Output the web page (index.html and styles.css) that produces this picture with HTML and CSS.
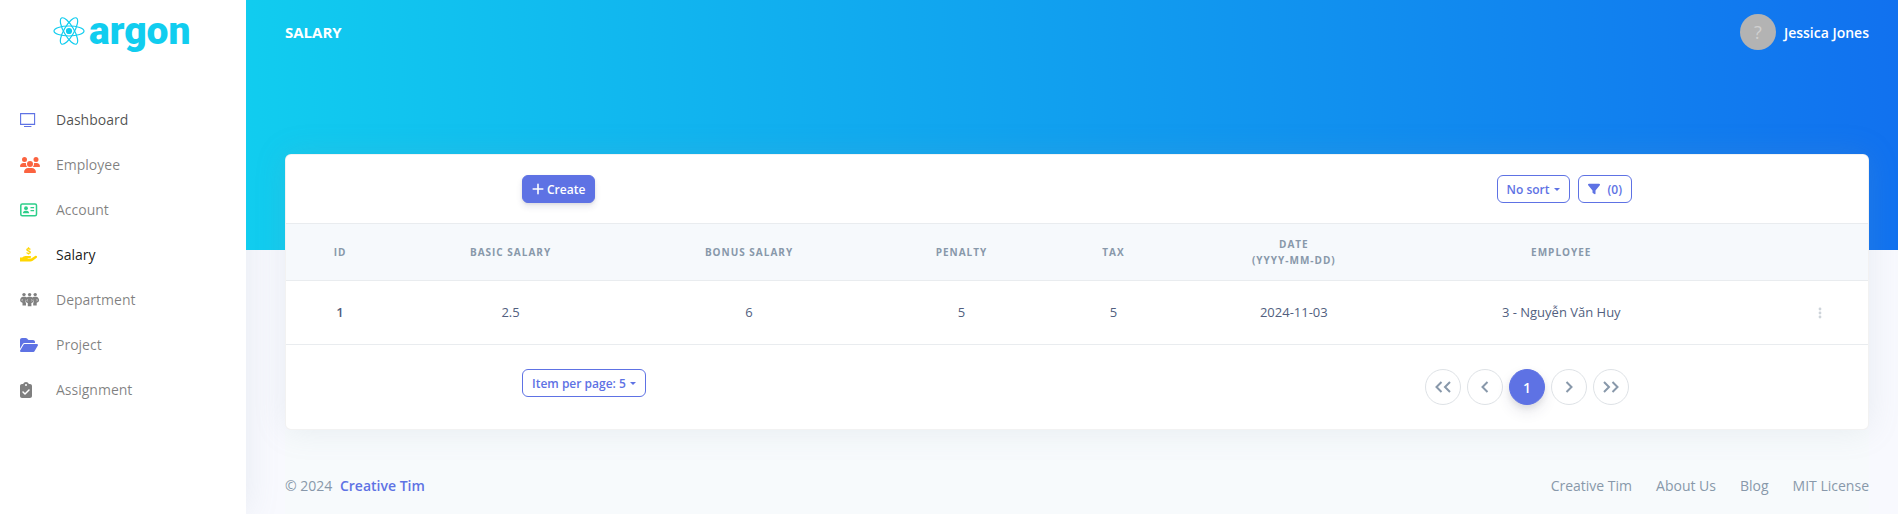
FILE: index.html
```html
<!DOCTYPE html>
<html lang="en">
<head>
<meta charset="utf-8">
<title>Salary</title>
<link rel="stylesheet" href="styles.css">
</head>
<body>
<div class="layout">
  <nav class="sidebar">
    <a class="brand" href="#">
      <svg class="brand-mark" viewBox="0 0 32 28" aria-hidden="true">
        <g fill="none" stroke="currentColor" stroke-width="1.2">
          <ellipse cx="16" cy="14" rx="15" ry="5"/>
          <ellipse cx="16" cy="14" rx="15" ry="5" transform="rotate(60 16 14)"/>
          <ellipse cx="16" cy="14" rx="15" ry="5" transform="rotate(120 16 14)"/>
        </g>
        <circle cx="16" cy="14" r="3.1" fill="currentColor"/>
      </svg>
      <span class="brand-name">argon</span>
    </a>
    <ul class="nav">
      <li><a class="nav-link nav-hover" href="#"><span class="nav-icon indigo"><svg width="16" height="16" viewBox="0 0 16 16"><path d="M.6 1.600h14v10.800H.6zM4 14.500h7.400" fill="none" stroke="currentColor" stroke-width="1.1"/></svg></span>Dashboard</a></li>
      <li><a class="nav-link" href="#"><span class="nav-icon orange"><svg width="20" height="16" viewBox="0 0 640 512"><path fill="currentColor" d="M144 0a80 80 0 1 1 0 160A80 80 0 1 1 144 0zM512 0a80 80 0 1 1 0 160A80 80 0 1 1 512 0zM0 298.700C0 239.800 47.800 192 106.700 192h42.700c15.900 0 31 3.500 44.600 9.700c-1.300 7.200-1.900 14.700-1.900 22.300c0 38.200 16.800 72.500 43.300 96H21.300C9.600 320 0 310.400 0 298.700zM405.300 320h-.7c26.600-23.500 43.300-57.800 43.300-96c0-7.600-.7-15-1.900-22.300c13.600-6.300 28.700-9.700 44.600-9.700h42.700C592.200 192 640 239.800 640 298.700c0 11.800-9.600 21.300-21.300 21.300H405.300zM224 224a96 96 0 1 1 192 0a96 96 0 1 1-192 0zM128 485.300C128 411.700 187.700 352 261.300 352h117.400C452.300 352 512 411.700 512 485.300c0 14.700-11.900 26.700-26.700 26.700H154.700c-14.700 0-26.700-11.900-26.700-26.700z"/></svg></span>Employee</a></li>
      <li><a class="nav-link" href="#"><span class="nav-icon green"><svg width="18" height="16" viewBox="0 0 18 16"><rect x=".8" y="2" width="15.700" height="11.800" rx="1.500" fill="none" stroke="currentColor" stroke-width="1.500"/><circle cx="6" cy="6.200" r="1.900" fill="currentColor"/><path d="M2.900 11.300c0-1.600 1-2.500 2.400-2.500h1.400c1.400 0 2.400.9 2.400 2.500z" fill="currentColor"/><path d="M10.500 5.600h3.600M10.500 8.700h3.600" stroke="currentColor" stroke-width="1.300"/></svg></span>Account</a></li>
      <li><a class="nav-link nav-active" href="#"><span class="nav-icon yellow"><svg width="18" height="16" viewBox="0 0 18 16"><path d="M10.300 2.600C9.800 1.500 6.900 1.300 6.800 2.800c0 1.600 3.500.8 3.500 2.500 0 1.500-3 1.300-3.700.2M8.500.3v1.500M8.500 6v1.500" fill="none" stroke="currentColor" stroke-width="1.300"/><path d="M0 10.600h2.200l1.400-1c.6-.4 1.300-.6 2-.6h4.600c1.300 0 1.300 1.900 0 1.900H7.700v.6h3.500l3.900-2.500c1.500-.8 2.700.7 1.600 1.700l-4 3.100c-.7.500-1.400.8-2.300.8H0z" fill="currentColor"/></svg></span>Salary</a></li>
      <li><a class="nav-link" href="#"><span class="nav-icon gray"><svg width="20" height="16" viewBox="0 0 20 16"><g fill="currentColor"><circle cx="4" cy="2.600" r="1.700"/><circle cx="9.600" cy="2.600" r="1.700"/><circle cx="15.200" cy="2.600" r="1.700"/><path d="M3 4.800h2.100c.8 0 1.400.3 1.800.8-1.700 1.800-1.700 4.200-.9 5.900v1.900H2.500v-2.600C.9 10.200 0 9.100.1 7.900.4 6.200 1.400 4.800 3 4.800zM16.200 4.800h-2.100c-.8 0-1.400.3-1.800.8 1.700 1.800 1.700 4.200.9 5.900v1.900h3.500v-2.600c1.600-.6 2.500-1.700 2.400-2.900-.3-1.700-1.300-3.100-2.900-3.100zM8.700 4.800h1.800c1.700 0 2.700 1.600 2.900 3.200.2 1.300-.7 2.700-2 3.100v3.100H7.800v-3.100c-1.300-.4-2.200-1.800-2-3.100C6 6.400 7 4.800 8.700 4.800z"/></g><path d="M7.700 7.300c-.8.700-.8 1.500 0 2.100M11.500 7.300c.8.700.8 1.500 0 2.100M2.700 7c-.9.700-.9 1.600 0 2.200M16.500 7c.9.700.9 1.600 0 2.200" stroke="#fff" stroke-width=".6" fill="none"/></svg></span>Department</a></li>
      <li><a class="nav-link" href="#"><span class="nav-icon indigo"><svg width="18" height="16" viewBox="0 0 576 512"><path fill="currentColor" d="M88.700 223.800L0 375.800V96C0 60.700 28.700 32 64 32h117.500c17 0 33.300 6.700 45.300 18.700l26.500 26.500c12 12 28.300 18.700 45.300 18.700H416c35.300 0 64 28.700 64 64v32H144c-22.800 0-43.800 12.100-55.300 31.800zm27.600 16.100C122.100 230 132.600 224 144 224h400c11.500 0 22 6.100 27.700 16.100s5.700 22.200-.1 32.100l-112 192C453.900 474 443.400 480 432 480H32c-11.500 0-22-6.100-27.700-16.100s-5.700-22.200.1-32.100z"/></svg></span>Project</a></li>
      <li><a class="nav-link" href="#"><span class="nav-icon gray"><svg width="12" height="16" viewBox="0 0 384 512"><path fill="currentColor" fill-rule="evenodd" d="M192 0c-41.800 0-77.400 26.700-90.500 64H64C28.700 64 0 92.700 0 128v320c0 35.300 28.700 64 64 64h256c35.300 0 64-28.700 64-64V128c0-35.300-28.700-64-64-64h-37.500C269.400 26.700 233.800 0 192 0zm0 64a32 32 0 1 1 0 64a32 32 0 1 1 0-64zM305 273L177 401c-9.400 9.400-24.600 9.400-33.900 0L79 337c-9.400-9.400-9.400-24.600 0-33.900s24.600-9.400 33.900 0l47 47L271 239c9.400-9.400 24.600-9.400 33.900 0s9.400 24.600 0 33.900z"/></svg></span>Assignment</a></li>
    </ul>
  </nav>
  <div class="main">
    <header class="hero">
      <a class="page-title" href="#">SALARY</a>
      <a class="user" href="#"><span class="avatar">?</span>Jessica Jones</a>
    </header>
    <div class="content">
      <section class="card">
        <div class="toolbar">
          <button class="btn btn-primary" type="button"><svg width="12" height="12" viewBox="0 0 12 12"><path d="M6 1.200v9.600M1.200 6h9.600" stroke="currentColor" stroke-width="1.600" stroke-linecap="round"/></svg>Create</button>
          <div class="group">
            <button class="btn" type="button">No sort<span class="caret"></span></button>
            <button class="btn btn-filter" type="button"><svg width="12" height="12" viewBox="0 0 512 512"><path fill="currentColor" d="M3.900 54.900C10.500 40.900 24.500 32 40 32h432c15.500 0 29.500 8.900 36.100 22.900s4.600 30.500-5.200 42.500L320 320.900V448c0 12.100-6.800 23.200-17.700 28.600s-23.800 4.300-33.500-3l-64-48c-8.100-6-12.800-15.500-12.800-25.600v-79.100L9 97.300C-.7 85.400-2.800 68.800 3.900 54.900z"/></svg>(0)</button>
          </div>
        </div>
        <table class="table">
          <colgroup><col class="c-id"><col class="c-basic"><col class="c-bonus"><col class="c-penalty"><col class="c-tax"><col class="c-date"><col class="c-employee"><col></colgroup>
          <thead><tr><th scope="col">ID</th><th scope="col">BASIC SALARY</th><th scope="col">BONUS SALARY</th><th scope="col">PENALTY</th><th scope="col">TAX</th><th scope="col">DATE<br>(YYYY-MM-DD)</th><th scope="col">EMPLOYEE</th><td></td></tr></thead>
          <tbody><tr><th scope="row">1</th><td>2.5</td><td>6</td><td>5</td><td>5</td><td>2024-11-03</td><td>3 - Nguyễn Văn Huy</td><td class="actions"><button class="more" type="button" aria-label="Actions"><svg width="4" height="12" viewBox="0 0 4 12"><g fill="currentColor"><circle cx="2" cy="2" r="1.400"/><circle cx="2" cy="6" r="1.400"/><circle cx="2" cy="10" r="1.400"/></g></svg></button></td></tr></tbody>
        </table>
        <div class="toolbar">
          <button class="btn" type="button">Item per page: 5<span class="caret"></span></button>
          <div class="pages">
            <button class="page" type="button" aria-label="First"><svg width="16" height="12" viewBox="0 0 16 12"><path d="M6.500 1 1.500 6l5 5M15 1l-5 5 5 5"/></svg></button>
            <button class="page" type="button" aria-label="Previous"><svg width="8" height="12" viewBox="0 0 8 12"><path d="M6.500 1 1.500 6l5 5"/></svg></button>
            <button class="page page-active" type="button">1</button>
            <button class="page" type="button" aria-label="Next"><svg width="8" height="12" viewBox="0 0 8 12"><path d="m1.500 1 5 5-5 5"/></svg></button>
            <button class="page" type="button" aria-label="Last"><svg width="16" height="12" viewBox="0 0 16 12"><path d="m1 1 5 5-5 5M9.500 1l5 5-5 5"/></svg></button>
          </div>
        </div>
      </section>
      <footer class="footer">
        <div class="copyright">© 2024 <a href="#">Creative Tim</a></div>
        <div class="links"><a href="#">Creative Tim</a><a href="#">About Us</a><a href="#">Blog</a><a href="#">MIT License</a></div>
      </footer>
    </div>
  </div>
</div>
</body>
</html>
```

FILE: styles.css
```css
* { box-sizing: border-box; }

body {
  margin: 0;
  background: #f8f9fe;
  color: #525f7f;
  font-family: "Open Sans", sans-serif;
  font-size: 14px;
  line-height: 21px;
}

a { color: inherit; text-decoration: none; }
button { font-family: inherit; cursor: pointer; }
svg { display: block; flex: none; }

.layout { display: flex; min-height: 100vh; }

.sidebar {
  flex: none;
  width: 246px;
  background: #fff;
  box-shadow: 0 0 32px rgba(136, 152, 170, .15);
}

.brand {
  display: flex;
  align-items: center;
  gap: 4px;
  height: 62px;
  padding-left: 53px;
  color: #11cdef;
}
.brand-mark { width: 32px; height: 28px; }
.brand-name {
  font: 900 39px/38px Roboto, sans-serif;
}

.nav { list-style: none; margin: 0; padding: 35px 0 0; }
.nav-link {
  display: flex;
  align-items: center;
  padding: 12px 20px;
  color: rgba(0, 0, 0, .5);
}
.nav-icon { width: 36px; }
.nav-hover { color: rgba(0, 0, 0, .7); }
.nav-active { color: rgba(0, 0, 0, .9); }
.indigo { color: #5e72e4; }
.orange { color: #fb6340; }
.green { color: #2dce89; }
.yellow { color: #ffd600; }
.gray { color: #7f7f7f; }

.main { flex: 1; display: flex; flex-direction: column; min-width: 0; }

.hero {
  display: flex;
  justify-content: space-between;
  align-items: flex-start;
  height: 250px;
  padding: 14px 29px 0 39px;
  background: linear-gradient(87deg, #11cdef 0, #1171ef 100%);
  color: #fff;
  font-weight: 600;
}
.page-title { font-size: 15px; font-weight: 700; line-height: 36px; }
.user { display: flex; align-items: center; gap: 8px; }
.avatar {
  width: 36px;
  height: 36px;
  border-radius: 50%;
  background: #b3b3b3;
  color: #d0d0d0;
  font: 18px/36px "Open Sans", sans-serif;
  text-align: center;
}

.content {
  flex: 1;
  display: flex;
  flex-direction: column;
  margin-top: -96px;
  padding: 0 29px 0 39px;
}

.card {
  position: relative;
  background: #fff;
  border: 1px solid rgba(0, 0, 0, .05);
  border-radius: 6px;
  box-shadow: 0 0 32px rgba(136, 152, 170, .15);
}

.toolbar {
  display: flex;
  justify-content: space-between;
  align-items: flex-start;
  max-width: 1110px;
  margin: 0 auto;
  padding: 20px 0;
}
.table + .toolbar { padding: 24px 0; }

.group { display: flex; gap: 8px; }
.btn {
  display: flex;
  align-items: center;
  height: 28px;
  padding: 0 9px;
  border: 1px solid #5e72e4;
  border-radius: 6px;
  background: none;
  color: #5e72e4;
  font-size: 12px;
  font-weight: 600;
}
.btn-primary {
  gap: 3px;
  background: #5e72e4;
  color: #fff;
  box-shadow: 0 4px 6px rgba(50, 50, 93, .11), 0 1px 3px rgba(0, 0, 0, .08);
}
.btn-filter { gap: 8px; }
.caret {
  margin-left: 4px;
  border: 3px solid transparent;
  border-top-color: currentColor;
  border-bottom: 0;
}

.table { width: 100%; border-collapse: collapse; table-layout: fixed; text-align: center; }
.c-id { width: 6.83%; }
.c-basic { width: 14.73%; }
.c-bonus { width: 15.42%; }
.c-penalty { width: 11.44%; }
.c-tax { width: 7.77%; }
.c-date { width: 15.04%; }
.c-employee { width: 18.77%; }
.table th, .table td { padding: 12px 0; }
.table thead th, .table thead td {
  background: #f6f9fc;
  border-top: 1px solid #e9ecef;
  border-bottom: 1px solid #e9ecef;
  color: #8898aa;
  font-size: 10px;
  font-weight: 700;
  letter-spacing: 1px;
  line-height: 16px;
}
.table tbody th, .table tbody td {
  height: 64px;
  border-bottom: 1px solid #e9ecef;
  font-size: 13px;
}
.table tbody th { font-weight: 600; }
.table .actions { padding-right: 24px; }
.more {
  display: flex;
  justify-content: center;
  width: 48px;
  margin-left: auto;
  padding: 8px 0;
  border: 0;
  background: none;
  color: #ced4da;
}

.pages { display: flex; gap: 6px; margin-right: 3px; }
.page {
  display: flex;
  align-items: center;
  justify-content: center;
  width: 36px;
  height: 36px;
  padding: 0;
  border: 1px solid #dee2e6;
  border-radius: 50%;
  background: #fff;
  color: #8898aa;
  font-size: 14px;
}
.page path { fill: none; stroke: currentColor; stroke-width: 2; }
.page-active {
  border-color: #5e72e4;
  background: #5e72e4;
  color: #fff;
  font-weight: 600;
  box-shadow: 0 7px 14px rgba(50, 50, 93, .1), 0 3px 6px rgba(0, 0, 0, .08);
}

.footer {
  flex: 1;
  display: flex;
  justify-content: space-between;
  padding: 45px 0 16px;
  background: #f7fafc;
  color: #8898aa;
}
.copyright a { margin-left: 4px; color: #5e72e4; font-weight: 600; }
.links { display: flex; gap: 24px; }
```
